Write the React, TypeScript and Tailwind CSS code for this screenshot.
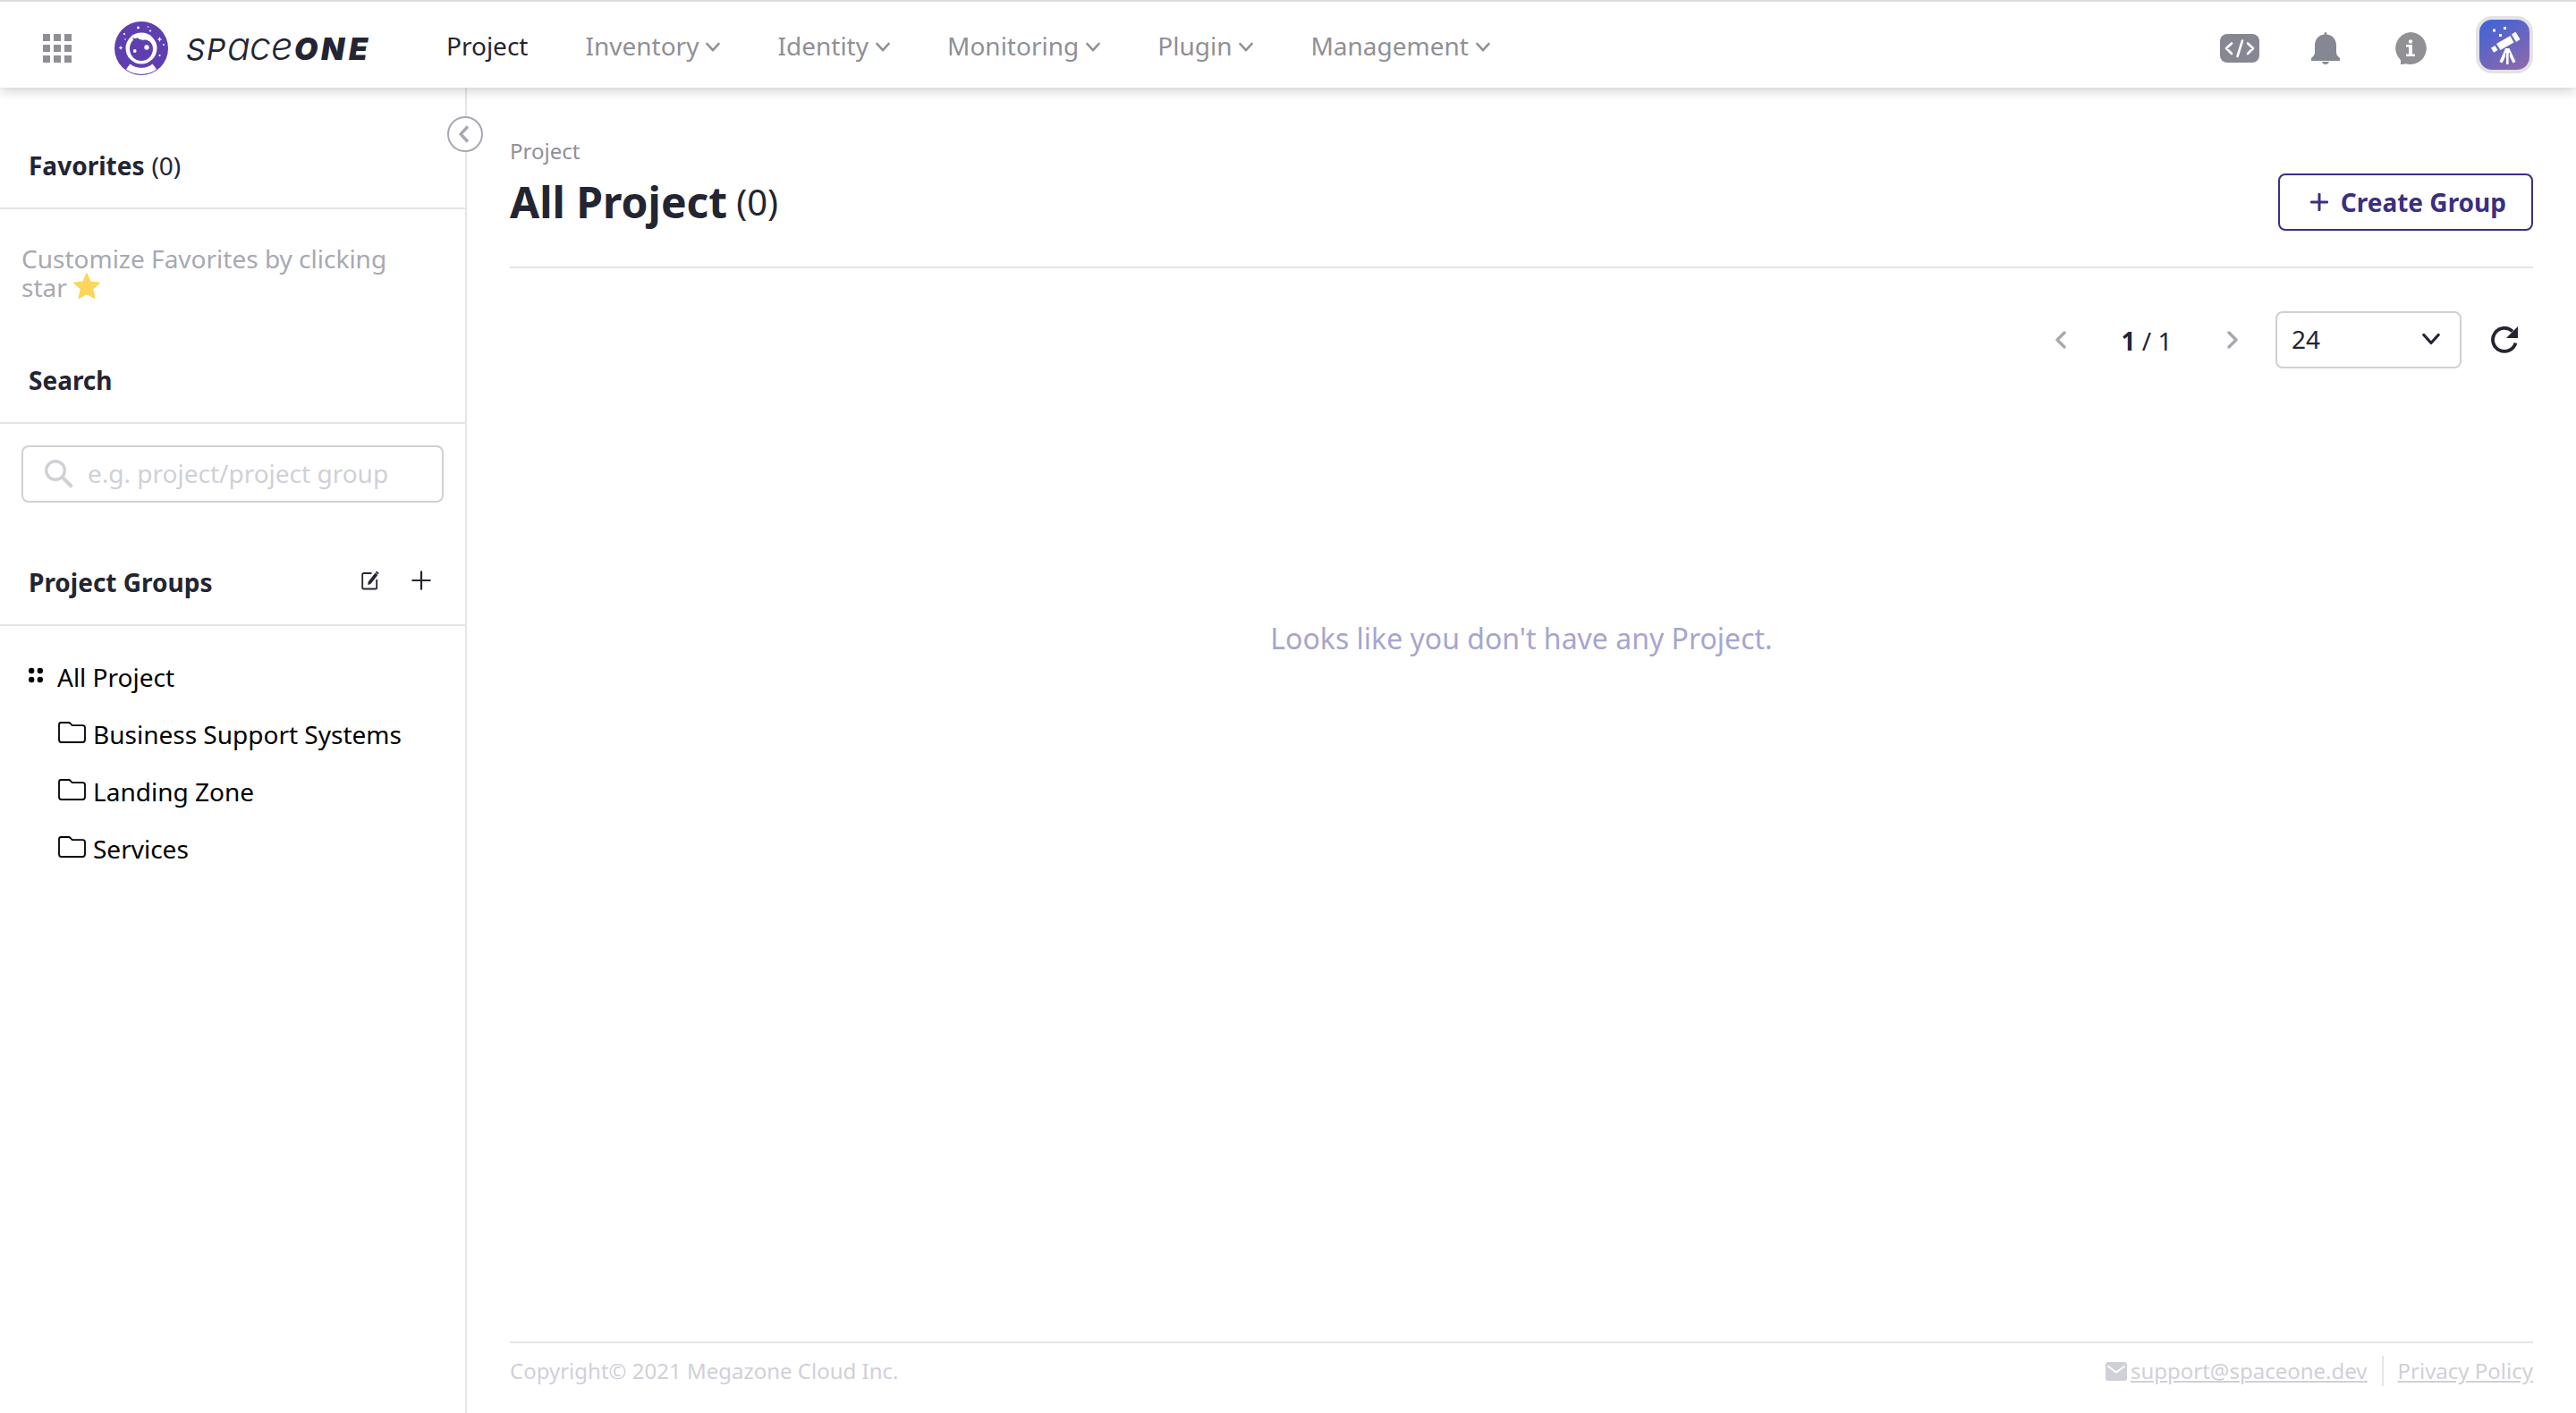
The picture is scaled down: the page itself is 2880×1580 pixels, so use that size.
import type { ReactNode } from 'react';

const menus = ['Inventory', 'Identity', 'Monitoring', 'Plugin', 'Management'];
const groups = ['Business Support Systems', 'Landing Zone', 'Services'];

function ChevronDown({ className }: { className: string }) {
  return (
    <svg className={className} viewBox="0 0 16 12" fill="none" stroke="currentColor" strokeWidth="2.6" strokeLinecap="round" strokeLinejoin="round" aria-hidden="true">
      <path d="M1.5 2 8 9.2 14.5 2" />
    </svg>
  );
}

function AppsIcon() {
  return (
    <svg className="size-8" viewBox="0 0 32 32" fill="#8f8f97" aria-hidden="true">
      {[0, 12, 24].map((y) => [0, 12, 24].map((x) => <rect key={`${x}-${y}`} x={x} y={y} width="8" height="8" />))}
    </svg>
  );
}

function LogoMark() {
  return (
    <svg className="size-15" viewBox="0 0 60 60" aria-hidden="true">
      <circle cx="30" cy="30" r="30" fill="#5f3fb0" />
      <path d="M17.500 48c7 5.800 18 5.800 25 0l4 5.500c-9 6.500-24 6.500-33 0z" fill="#fff" stroke="#fff" strokeLinejoin="round" />
      <circle cx="30" cy="30" r="17.500" fill="#fff" />
      <path d="M22.500 19c-1-.5-1.600-.8-2.500-.6.800.8 1 1.500.8 2.600A13 13 0 0 0 17 30.500C17 38 22.500 44 30 44s13-6 13-13.500c0-5.800-4-9.500-8.500-10-4 .5-7-.5-9.500-2.500 0 .9-1 1.200-2.500 1z" fill="#5f3fb0" />
      <circle cx="36" cy="29" r="2.700" fill="#fff" />
      <circle cx="22.700" cy="33" r="1.900" fill="#fff" />
      <g fill="#fff">
        <circle cx="26.500" cy="7" r="1.400" />
        <circle cx="37.500" cy="6" r="0.800" />
        <circle cx="40" cy="10.500" r="1.100" />
        <circle cx="11" cy="14" r="1.100" />
        <circle cx="12" cy="20" r="0.800" />
        <circle cx="55" cy="26" r="0.900" />
        <circle cx="50.500" cy="38" r="1.100" />
        <path d="m7 27 .7 1.800 1.800.7-1.800.7L7 32l-.7-1.800-1.800-.7 1.800-.7zM50.500 17l.8 2.200 2.200.8-2.200.8-.8 2.200-.8-2.200-2.200-.8 2.200-.8z" />
      </g>
    </svg>
  );
}

function Wordmark() {
  return (
    <svg className="h-15 w-[216px]" viewBox="0 0 216 60" fill="#232533" fontStyle="italic" fontFamily="Inter, sans-serif" role="img" aria-label="SpaceONE">
      <text x="0" y="43" fontSize="33">S</text>
      <text x="23" y="43" fontSize="33">P</text>
      <text x="46" y="43" fontSize="43" fontWeight="300">a</text>
      <text x="71" y="43" fontSize="43" fontWeight="300">c</text>
      <text x="95" y="43" fontSize="43" fontWeight="300">e</text>
      <text x="121" y="43" fontSize="34" fontWeight="900">O</text>
      <text x="151" y="43" fontSize="34" fontWeight="900">N</text>
      <text x="182" y="43" fontSize="34" fontWeight="900">E</text>
    </svg>
  );
}

function CodeIcon() {
  return (
    <svg className="h-8 w-11" viewBox="0 0 44 32" aria-hidden="true">
      <rect width="44" height="32" rx="8" fill="#858793" />
      <path d="m13 10.500-6 5.500 6 6M31 10.500l6 5.500-6 6M25 7.500 19.500 25" fill="none" stroke="#fff" strokeWidth="2.600" strokeLinecap="round" strokeLinejoin="round" />
    </svg>
  );
}

function BellIcon() {
  return (
    <svg className="h-9 w-8" viewBox="0 0 32 36" fill="#858793" aria-hidden="true">
      <path d="M16 0c1 0 1.400.8 1.400 2.600C24 3.500 28 8 28 15v7c0 3 1 4.500 4 7v3H0v-3c3-2.500 4-4 4-7v-7C4 8 8 3.500 14.600 2.600 14.600.8 15 0 16 0zM12 33h8c-.5 2-2 3-4 3s-3.500-1-4-3z" />
    </svg>
  );
}

function InfoIcon() {
  return (
    <svg className="size-9" viewBox="0 0 36 36" aria-hidden="true">
      <path d="M18 0a18 18 0 1 1-5.500 35.200L7 36.500v-5.300A18 18 0 0 1 18 0z" fill="#909095" />
      <path d="M13 14h7v10.500h3V27H13v-2.500h3V16.500h-3z" fill="#fff" />
      <circle cx="18" cy="10.500" r="2.200" fill="#fff" />
    </svg>
  );
}

function AvatarIcon() {
  return (
    <svg className="size-14" viewBox="0 0 56 56" aria-hidden="true">
      <defs>
        <linearGradient id="avatar-sky" x1="0.200" y1="0" x2="0.800" y2="1">
          <stop offset="0" stopColor="#4263d5" />
          <stop offset="1" stopColor="#8b68ac" />
        </linearGradient>
      </defs>
      <rect width="56" height="56" rx="14" fill="url(#avatar-sky)" />
      <g fill="#fff">
        <path d="m36 16.500 4.500-3 5 8.500-4.500 3zM19 27l15.500-9 4 7.500-15 8.500zM13 31.500l4.500-2.500 3 5-4.500 2.800z" />
        <path d="M15 10.500h3v3h-3zM27 8h3v3h-3zM22 16h3v3h-3zM29.800 34h3v16h-3z" />
        <path d="M29 32h4.500l7 15-3 1.500-6-12-6 12-3-1.500z" />
      </g>
      <path d="M29.300 37v13M33.300 37v13" stroke="#6d66c0" strokeWidth="1" />
    </svg>
  );
}

function StarIcon() {
  return (
    <svg className="inline size-[30px] align-[-3px]" viewBox="0 0 28 28" fill="#fbd65a" stroke="#fbd65a" strokeWidth="2" strokeLinejoin="round" aria-hidden="true">
      <path d="m14 1.500 3.600 8.400 9 .9-6.800 6 2 9.200-7.800-4.600L6.200 26l2-9.200-6.800-6 9-.9z" />
    </svg>
  );
}

function SearchIcon() {
  return (
    <svg className="size-8 shrink-0" viewBox="0 0 32 32" fill="none" stroke="#d0d0d7" aria-hidden="true">
      <circle cx="12" cy="12" r="10.300" strokeWidth="3.400" />
      <path d="m19.500 19.500 11 11" strokeWidth="4" />
    </svg>
  );
}

function EditIcon() {
  return (
    <svg className="h-[22px] w-5" viewBox="0 0 20 22" fill="none" stroke="#232533" strokeWidth="1.800" strokeLinejoin="round" aria-hidden="true">
      <path d="M11.500 3H2.500C1.600 3 1.200 3.400 1.200 4.200v15c0 .8.400 1.300 1.300 1.300h13.300c.9 0 1.400-.5 1.400-1.300V10" />
      <path d="m8 12.500 7.500-9.500 2.500 2-7.500 9.500-3 1.200zM16 2l1-1 2.300 1.700-.8 1.300z" fill="#232533" strokeWidth="0.600" />
    </svg>
  );
}

function PlusIcon({ className }: { className: string }) {
  return (
    <svg className={className} viewBox="0 0 20 20" fill="none" stroke="currentColor" strokeLinecap="round" aria-hidden="true">
      <path d="M10 1.200v17.600M1.200 10h17.600" />
    </svg>
  );
}

function FolderIcon() {
  return (
    <svg className="mb-1 h-6 w-8" viewBox="0 0 32 24" fill="none" stroke="#000" strokeWidth="1.800" strokeLinejoin="round" aria-hidden="true">
      <path d="M2 3.500C2 1.800 2.800 1 4.200 1h8.600c.8 0 1.300.2 1.800.8l2.200 2.400h11.500c1.700 0 2.700.9 2.700 2.500v13.600c0 1.700-1 2.700-2.700 2.700H4.500C2.900 23 2 22 2 20.300z" />
    </svg>
  );
}

function DotsIcon() {
  return (
    <svg className="mb-1 h-[18px] w-4" viewBox="0 0 16 18" aria-hidden="true">
      <circle cx="3.200" cy="4" r="3.200" />
      <circle cx="12.800" cy="4" r="3.200" />
      <circle cx="3.200" cy="14" r="3.200" />
      <circle cx="12.800" cy="14" r="3.200" />
    </svg>
  );
}

function PageArrow({ flip }: { flip?: boolean }) {
  return (
    <svg className="h-5 w-3.5" viewBox="0 0 14 20" fill="none" stroke="#a7a9b2" strokeWidth="3.400" strokeLinecap="round" strokeLinejoin="round" aria-hidden="true">
      <path d={flip ? 'm3 2 8 8-8 8' : 'm11 2-8 8 8 8'} />
    </svg>
  );
}

function RefreshIcon() {
  return (
    <svg className="size-[30px]" viewBox="0 0 30 30" aria-hidden="true">
      <path d="M27.500 18.500A13 13 0 1 1 24 5.500" fill="none" stroke="#232533" strokeWidth="3.800" />
      <path d="M30 0v13H17z" fill="#232533" />
    </svg>
  );
}

function MailIcon() {
  return (
    <svg className="h-6 w-6" viewBox="0 0 24 24" aria-hidden="true">
      <rect y="2" width="24" height="21" rx="3" fill="#d0d0d8" />
      <path d="m2.500 6.500 9.500 7 9.500-7" fill="none" stroke="#fff" strokeWidth="2" />
    </svg>
  );
}

function SectionHeader({ title, count, children }: { title: string; count?: string; children?: ReactNode }) {
  return (
    <div className="flex h-34 items-end justify-between border-b-2 border-[#e5e5e6] pr-6 pb-[27px] pl-8">
      <h2 className="font-bold leading-10">
        {title}
        {count && <span className="ml-2 font-normal">{count}</span>}
      </h2>
      {children}
    </div>
  );
}

function TopBar() {
  return (
    <header className="relative z-10 flex h-[98px] items-center border-t-2 border-[#dcdce2] bg-white px-12 shadow-[0_4px_12px_rgba(0,0,0,0.18)]">
      <button type="button" aria-label="All services" className="mt-2">
        <AppsIcon />
      </button>
      <a href="#home" className="mt-2 ml-12 flex items-center gap-5" aria-label="SpaceONE home">
        <LogoMark />
        <Wordmark />
      </a>
      <nav className="mt-0.5 ml-[75px] flex items-center gap-16 text-[#909095]">
        <a href="#project" className="text-[#232533]">Project</a>
        {menus.map((menu) => (
          <button key={menu} type="button" className="flex items-center gap-2">
            {menu}
            <ChevronDown className="mt-1 h-3 w-4" />
          </button>
        ))}
      </nav>
      <div className="ml-auto flex items-center">
        <button type="button" aria-label="Cloud shell" className="mt-2 mr-[58px]"><CodeIcon /></button>
        <button type="button" aria-label="Notifications" className="mt-2 mr-[61px]"><BellIcon /></button>
        <button type="button" aria-label="Help" className="mt-2 mr-[55px]"><InfoIcon /></button>
        <button type="button" aria-label="Account" className="rounded-[18px] border-4 border-[#e3e3e6]"><AvatarIcon /></button>
      </div>
    </header>
  );
}

function Sidebar() {
  return (
    <aside className="relative w-[522px] shrink-0 border-r-2 border-[#e5e5e6]">
      <button type="button" aria-label="Collapse sidebar" className="absolute top-8 -right-5 flex size-10 items-center justify-center rounded-full border-2 border-[#a7a9b2] bg-white">
        <svg className="mr-0.5 h-5 w-3" viewBox="0 0 12 20" fill="none" stroke="#a7a9b2" strokeWidth="3.400" aria-hidden="true">
          <path d="m10 1.500-8 8.500 8 8.500" />
        </svg>
      </button>
      <SectionHeader title="Favorites" count="(0)" />
      <p className="h-26 pt-[39px] pr-14 pl-6 leading-8 text-[#a7a9b2]">
        Customize Favorites by clicking star <StarIcon />
      </p>
      <SectionHeader title="Search" />
      <label className="mx-6 mt-6 mb-0.5 flex h-16 items-center gap-4 rounded-lg border-2 border-[#d0d0d7] pr-4 pl-6">
        <SearchIcon />
        <input type="search" aria-label="Search projects" placeholder="e.g. project/project group" className="mb-0.5 min-w-0 flex-1 outline-none placeholder:text-[#d0d0d7]" />
      </label>
      <SectionHeader title="Project Groups">
        <div className="flex h-11 items-center gap-9 pr-3.5">
          <button type="button" aria-label="Edit groups"><EditIcon /></button>
          <button type="button" aria-label="Add group"><PlusIcon className="size-[22px] stroke-[2]" /></button>
        </div>
      </SectionHeader>
      <div className="mt-[25px] text-black">
        <a href="#all" className="flex h-16 items-center gap-4 pl-8">
          <DotsIcon />
          All Project
        </a>
        <ul>
          {groups.map((group) => (
            <li key={group}>
              <a href="#group" className="flex h-16 items-center gap-2 pl-16">
                <FolderIcon />
                {group}
              </a>
            </li>
          ))}
        </ul>
      </div>
    </aside>
  );
}

function Content() {
  return (
    <main className="flex min-w-0 flex-1 flex-col px-12 pt-[55px]">
      <nav aria-label="Breadcrumb" className="mb-[9px] text-2xl leading-8 text-[#909095]">Project</nav>
      <div className="flex items-center justify-between border-b-2 border-[#e5e5e6] pb-10">
        <h1 className="flex h-16 items-center gap-2.5 text-5xl font-bold">
          All Project
          <span className="text-[40px] font-normal">(0)</span>
        </h1>
        <button type="button" className="flex h-16 items-center gap-3.5 rounded-lg border-2 border-[#3b2f80] pr-7 pl-[34px] font-bold text-[#3b2f80]">
          <PlusIcon className="size-5 stroke-[3]" />
          Create Group
        </button>
      </div>
      <div className="mt-12 flex h-16 items-center justify-end">
        <button type="button" aria-label="Previous page" className="flex w-8 justify-center"><PageArrow /></button>
        <span className="mt-0.5 w-40 text-center"><b>1</b> / 1</span>
        <button type="button" aria-label="Next page" className="flex w-8 justify-center"><PageArrow flip /></button>
        <div className="relative mr-4 ml-8">
          <select aria-label="Items per page" defaultValue="24" className="h-16 w-52 appearance-none rounded-lg border-2 border-[#d0d0d7] bg-white pb-0.5 pl-4">
            <option>24</option>
            <option>36</option>
            <option>48</option>
          </select>
          <ChevronDown className="pointer-events-none absolute top-6 right-6 h-[15px] w-5" />
        </div>
        <button type="button" aria-label="Refresh" className="flex w-16 justify-center"><RefreshIcon /></button>
      </div>
      <p className="mt-[278px] text-center text-[32px] leading-12 text-[#a6a6cf]">Looks like you don't have any Project.</p>
      <footer className="mt-auto flex h-20 items-start justify-between border-t-2 border-[#e5e5e6] pt-3.5 text-2xl leading-[34px] text-[#d0d0d8]">
        <span>Copyright© 2021 Megazone Cloud Inc.</span>
        <div className="flex items-center">
          <MailIcon />
          <a href="mailto:support@spaceone.dev" className="ml-1 underline">support@spaceone.dev</a>
          <span className="mx-4 h-[34px] w-0.5 bg-[#e5e5e6]" />
          <a href="#privacy" className="underline">Privacy Policy</a>
        </div>
      </footer>
    </main>
  );
}

export default function App() {
  return (
    <div className="flex min-h-screen flex-col bg-white font-['Noto_Sans',sans-serif] text-[28px] leading-10 text-[#232533]">
      <TopBar />
      <div className="flex flex-1">
        <Sidebar />
        <Content />
      </div>
    </div>
  );
}
